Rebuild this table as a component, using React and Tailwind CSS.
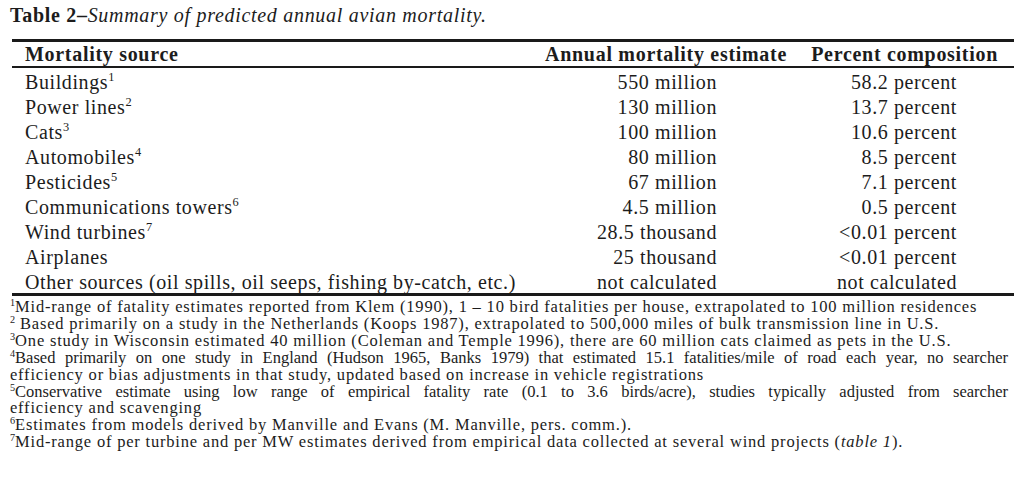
const rows = [
  { name: 'Buildings', sup: '1', est: '550 million', pct: '58.2 percent' },
  { name: 'Power lines', sup: '2', est: '130 million', pct: '13.7 percent' },
  { name: 'Cats', sup: '3', est: '100 million', pct: '10.6 percent' },
  { name: 'Automobiles', sup: '4', est: '80 million', pct: '8.5 percent' },
  { name: 'Pesticides', sup: '5', est: '67 million', pct: '7.1 percent' },
  { name: 'Communications towers', sup: '6', est: '4.5 million', pct: '0.5 percent' },
  { name: 'Wind turbines', sup: '7', est: '28.5 thousand', pct: '<0.01 percent' },
  { name: 'Airplanes', sup: '', est: '25 thousand', pct: '<0.01 percent' },
  { name: 'Other sources (oil spills, oil seeps, fishing by-catch, etc.)', sup: '', est: 'not calculated', pct: 'not calculated' },
];

// superscript note marker, raised with vertical-align
function Note({ children }) {
  return <span className="text-[0.62em] leading-[0] align-[0.62em] tracking-normal">{children}</span>;
}

export default function App() {
  return (
    <div className="w-[1024px] h-[489px] bg-white text-[#1c1c1c] font-['Liberation_Serif',serif] overflow-hidden">
      <div className="pl-[10px] pt-[4px] text-[20px] leading-[22px] tracking-[0.7px]">
        <span className="font-bold">Table 2–</span>
        <span className="italic">Summary of predicted annual avian mortality.</span>
      </div>

      <div className="ml-[12px] w-[1002px] mt-[13px]">
        <div className="border-t-[3px] border-[#1a1a1a]" />
        <div className="flex h-[26px] items-center text-[20px] font-bold tracking-[0.7px] border-b-2 border-[#1a1a1a]">
          <div className="flex-1 pl-[13px]">Mortality source</div>
          <div className="w-[265px] text-right pr-[18px]">Annual mortality estimate</div>
          <div className="w-[209px] text-right pr-[16px]">Percent composition</div>
        </div>
        <div className="border-b-[3px] border-[#1a1a1a]">
          {rows.map((r) => (
            <div key={r.name} className="flex h-[25px] items-center text-[20px] tracking-[0.6px] pt-[3px]">
              <div className="flex-1 pl-[13px] whitespace-nowrap">
                {r.name}
                {r.sup && <Note>{r.sup}</Note>}
              </div>
              <div className="w-[265px] text-right pr-[88px]">{r.est}</div>
              <div className="w-[209px] text-right pr-[57px]">{r.pct}</div>
            </div>
          ))}
        </div>
      </div>

      <div className="ml-[10px] w-[1002px] text-[16.5px] leading-[16.9px] tracking-[0.8px] pt-[3px]">
        <div><Note>1</Note>Mid-range of fatality estimates reported from Klem (1990), 1 – 10 bird fatalities per house, extrapolated to 100 million residences</div>
        <div><Note>2</Note> Based primarily on a study in the Netherlands (Koops 1987), extrapolated to 500,000 miles of bulk transmission line in U.S.</div>
        <div><Note>3</Note>One study in Wisconsin estimated 40 million (Coleman and Temple 1996), there are 60 million cats claimed as pets in the U.S.</div>
        <div className="text-justify [text-align-last:justify] pr-[4px] tracking-normal"><Note>4</Note>Based primarily on one study in England (Hudson 1965, Banks 1979) that estimated 15.1 fatalities/mile of road each year, no searcher</div>
        <div>efficiency or bias adjustments in that study, updated based on increase in vehicle registrations</div>
        <div className="text-justify [text-align-last:justify] pr-[4px] tracking-normal"><Note>5</Note>Conservative estimate using low range of empirical fatality rate (0.1 to 3.6 birds/acre), studies typically adjusted from searcher</div>
        <div>efficiency and scavenging</div>
        <div><Note>6</Note>Estimates from models derived by Manville and Evans (M. Manville, pers. comm.).</div>
        <div><Note>7</Note>Mid-range of per turbine and per MW estimates derived from empirical data collected at several wind projects (<span className="italic">table 1</span>).</div>
      </div>
    </div>
  );
}
